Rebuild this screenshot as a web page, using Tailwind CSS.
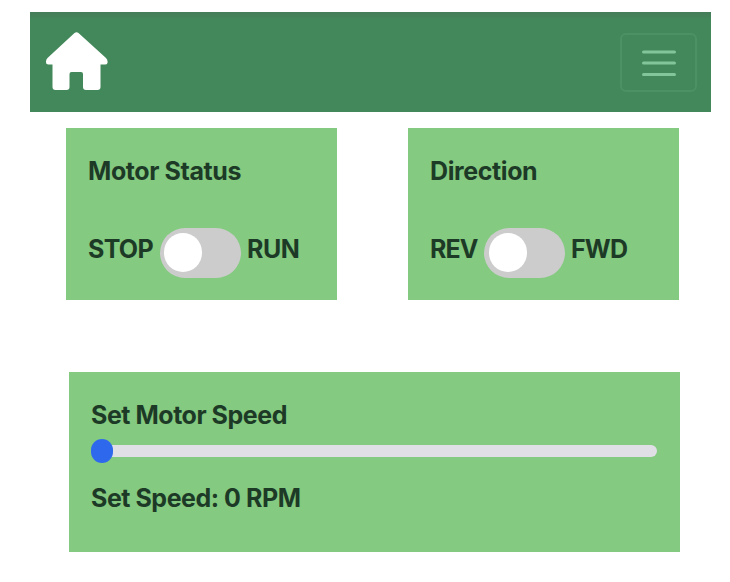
<!DOCTYPE html>
<html lang="en">
<head>
<meta charset="utf-8">
<title>Motor Control</title>
<script src="https://cdn.jsdelivr.net/npm/@tailwindcss/browser@4"></script>
</head>
<body class="bg-white w-[730px] h-[582px] overflow-hidden pt-3 text-[#1d3a27] font-['Inter',sans-serif] font-bold text-[25px] leading-[30px]">
<header class="ml-[30px] w-[681px] h-[100px] bg-linear-to-b from-[#457b59] from-0% via-[#42885a] via-8% to-[#42885a] flex items-start justify-between pl-4 pr-[14px]">
  <a class="mt-5 block" aria-label="Home">
    <svg class="block w-[62px] h-[58px]" viewBox="0 0 62 58" fill="#fff"><path d="M28.500 1Q30.500 -.700 32.500 1L60 26Q62 28 61.500 31Q61 32.500 59 32.500H54.500V55Q54.500 58 51.500 58H40Q37 58 37 55V42Q37 40 35 40H25.500Q23.500 40 23.500 42V55Q23.500 58 20.500 58H9.500Q6.500 58 6.500 55V32.500H2.500Q0 32.500 0 30Q-.200 28 1.500 26Z"/></svg>
  </a>
  <button class="mt-[21px] w-[77px] h-[59px] rounded-md border-2 border-[#4b9164] flex items-center justify-center" aria-label="Menu">
    <svg class="w-[36px] h-[28px] mt-px" viewBox="0 0 36 28" fill="none" stroke="#83c59b" stroke-width="3" stroke-linecap="round"><path d="M2.500 3h31M2.500 14h31M2.500 25.500h31"/></svg>
  </button>
</header>
<main class="pt-4">
  <section class="flex gap-[71px] ml-[66px]">
    <div class="w-[271px] h-[172px] bg-[#84ca80] pl-[22px] pt-7">
      <h2><span class="inline-block tracking-[-0.4px]">Motor Status</span></h2>
      <div class="flex mt-[42px]">
        <span class="w-[72px] pt-[6px] whitespace-nowrap tracking-[-0.7px]">STOP</span>
        <span class="w-[81px] h-[50px] rounded-full bg-[#cccccc] pl-[4px] pt-[5px]"><span class="block w-[38px] h-[39px] rounded-full bg-white"></span></span>
        <span class="pl-[6px] pt-[6px] whitespace-nowrap tracking-[-0.5px]">RUN</span>
      </div>
    </div>
    <div class="w-[271px] h-[172px] bg-[#84ca80] pl-[22px] pt-7">
      <h2><span class="inline-block tracking-[-0.4px]">Direction</span></h2>
      <div class="flex mt-[42px]">
        <span class="w-[54px] pt-[6px] whitespace-nowrap tracking-[-0.9px]">REV</span>
        <span class="w-[81px] h-[50px] rounded-full bg-[#cccccc] pl-[5px] pt-[5px]"><span class="block w-[38px] h-[39px] rounded-full bg-white"></span></span>
        <span class="pl-[6px] pt-[6px] whitespace-nowrap tracking-[-0.8px]">FWD</span>
      </div>
    </div>
  </section>
  <section class="mt-[72px] ml-[69px] w-[611px] h-[180px] bg-[#84ca80] pl-[22px] pt-[28px]">
    <h2><span class="inline-block tracking-[-0.47px]">Set Motor Speed</span></h2>
    <div class="mt-[9px] w-[566px] h-6 flex items-center">
      <div class="w-full h-3 rounded-full bg-[#e0dfe5] flex items-center">
        <span class="block w-[22px] h-6 rounded-full bg-[#2e69ed]"></span>
      </div>
    </div>
    <p class="mt-[20px]"><span class="inline-block tracking-[-0.47px]">Set Speed: 0 RPM</span></p>
  </section>
</main>
</body>
</html>
